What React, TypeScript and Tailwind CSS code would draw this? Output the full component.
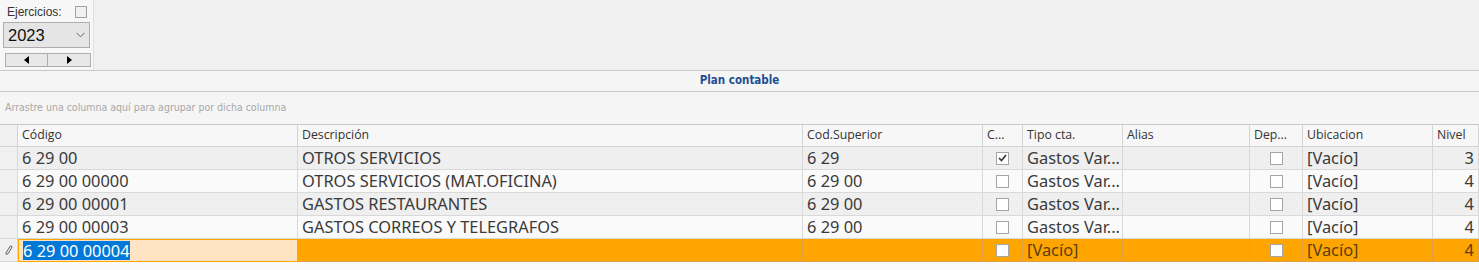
import React from "react";

const gridCols = "grid grid-cols-[18px_280px_505px_180px_40px_100px_127px_53px_130px_46px]";

type Row = { cod: string; desc: string; sup: string; c: boolean; tipo: string; ub: string; niv: string };
const rows: Row[] = [
  { cod: "6 29 00", desc: "OTROS SERVICIOS", sup: "6 29", c: true, tipo: "Gastos Var...", ub: "[Vacío]", niv: "3" },
  { cod: "6 29 00 00000", desc: "OTROS SERVICIOS (MAT.OFICINA)", sup: "6 29 00", c: false, tipo: "Gastos Var...", ub: "[Vacío]", niv: "4" },
  { cod: "6 29 00 00001", desc: "GASTOS RESTAURANTES", sup: "6 29 00", c: false, tipo: "Gastos Var...", ub: "[Vacío]", niv: "4" },
  { cod: "6 29 00 00003", desc: "GASTOS CORREOS Y TELEGRAFOS", sup: "6 29 00", c: false, tipo: "Gastos Var...", ub: "[Vacío]", niv: "4" },
];

function Check({ checked }: { checked?: boolean }) {
  return (
    <div className="w-[13px] h-[13px] border border-[#a5a5a5] bg-white flex items-center justify-center">
      {checked && (
        <svg width="9" height="8" viewBox="0 0 9 8">
          <path d="M1 4 L3.5 6.5 L8 1" stroke="#333" strokeWidth="1.6" fill="none" />
        </svg>
      )}
    </div>
  );
}

const cell = "border-r border-b border-[#d9d9d9] flex items-center px-[4px] text-[16.4px] text-[#3a3a3a] overflow-hidden whitespace-nowrap h-[23px]";

export default function App() {
  return (
    <div className="w-[1479px] h-[270px] bg-[#f5f5f5] overflow-hidden" style={{ fontFamily: '"Noto Sans", "Open Sans", sans-serif' }}>
      {/* Top panel */}
      <div className="h-[71px] bg-[#f0f0f0] border-b border-[#c8c8c8] flex">
        <div className="w-[94px] h-[70px] bg-[#f7f7f7] border-r border-[#e0e0e0] relative">
          <div className="flex items-center justify-between pl-[7px] pr-[6px] pt-[4px] h-[20px]">
            <span className="text-[12px] text-[#333] leading-none" style={{ fontFamily: '"Liberation Sans", sans-serif' }}>Ejercicios:</span>
            <div className="w-[12px] h-[12px] border border-[#a0a0a0] bg-[#f0f0f0]"></div>
          </div>
          <div className="mx-[3px] mt-[2px] h-[26px] bg-[#e5e5e5] border border-[#adadad] flex items-center justify-between pl-[4px] pr-[4px]">
            <span className="text-[16.5px] text-[#111] leading-none" style={{ fontFamily: '"Liberation Sans", sans-serif' }}>2023</span>
            <svg width="9" height="6" viewBox="0 0 9 6">
              <path d="M0.5 0.8 L4.5 4.8 L8.5 0.8" stroke="#666" strokeWidth="1" fill="none" />
            </svg>
          </div>
          <div className="ml-[5px] mt-[5px] w-[86px] h-[14px] flex">
            <div className="w-[43px] h-full bg-[#e8e8e8] border border-[#adadad] flex items-center justify-center">
              <svg width="5" height="8" viewBox="0 0 5 8"><path d="M5 0 L0 4 L5 8 Z" fill="#000" /></svg>
            </div>
            <div className="w-[43px] h-full bg-[#e8e8e8] border border-l-0 border-[#adadad] flex items-center justify-center">
              <svg width="5" height="8" viewBox="0 0 5 8"><path d="M0 0 L5 4 L0 8 Z" fill="#000" /></svg>
            </div>
          </div>
        </div>
      </div>
      {/* Title */}
      <div className="h-[21px] border-b border-[#c8c8c8] flex items-center justify-center bg-[#f5f5f5]">
        <span className="text-[11.5px] font-bold text-[#1f4e91]" style={{ fontFamily: '"DejaVu Sans Condensed", "DejaVu Sans", sans-serif' }}>Plan contable</span>
      </div>
      {/* Group panel */}
      <div className="h-[33px] border-b border-[#c8c8c8] flex items-center pl-[5px] bg-[#f5f5f5]">
        <span className="text-[10.5px] text-[#a8a8a8]" style={{ fontFamily: '"DejaVu Sans Condensed", "DejaVu Sans", sans-serif' }}>Arrastre una columna aquí para agrupar por dicha columna</span>
      </div>
      {/* Header */}
      <div className={`${gridCols} h-[22px] bg-[#f7f7f7]`}>
        {["", "Código", "Descripción", "Cod.Superior", "C...", "Tipo cta.", "Alias", "Dep...", "Ubicacion", "Nivel"].map((h, i) => (
          <div key={i} className={`border-r border-b border-[#d4d4d4] flex items-center px-[4px] text-[12.3px] text-[#333] whitespace-nowrap overflow-hidden ${i === 0 ? "bg-[#f0f0f0]" : ""}`} style={{ fontFamily: '"Open Sans", sans-serif' }}>
            {h}
          </div>
        ))}
      </div>
      {/* Rows */}
      {rows.map((r, ri) => {
        const bg = ri % 2 === 0 ? "bg-[#efefef]" : "bg-[#fafafa]";
        return (
          <div key={ri} className={`${gridCols} ${bg}`}>
            <div className="border-r border-b border-[#d9d9d9] bg-[#f0f0f0] h-[23px]"></div>
            <div className={cell}>{r.cod}</div>
            <div className={cell}>{r.desc}</div>
            <div className={cell}>{r.sup}</div>
            <div className={`${cell} justify-center`}><Check checked={r.c} /></div>
            <div className={cell}>{r.tipo}</div>
            <div className={cell}></div>
            <div className={`${cell} justify-center`}><Check /></div>
            <div className={cell}>{r.ub}</div>
            <div className={`${cell} justify-end`}>{r.niv}</div>
          </div>
        );
      })}
      {/* Edit row */}
      <div className={`${gridCols} bg-[#ffa500]`}>
        <div className="border-r border-b border-[#d9d9d9] bg-[#f0f0f0] h-[23px] flex items-center justify-center">
          <svg width="8" height="10" viewBox="0 0 8 10">
            <path d="M5.5 0.8 L7.2 1.8 L3 8.8 L1 9.2 L1.2 7.5 Z" stroke="#555" strokeWidth="0.9" fill="none" />
          </svg>
        </div>
        <div className="border border-[#ffa500] bg-[#ffe4c4] h-[23px] flex items-center pl-[4px]">
          <span className="bg-[#0078d7] text-white text-[16.4px] leading-[19px] px-0">6 29 00 00004</span>
        </div>
        <div className={`${cell} border-[#e0a040]`}></div>
        <div className={`${cell} border-[#e0a040]`}></div>
        <div className={`${cell} justify-center border-[#e0a040]`}><Check /></div>
        <div className={`${cell} border-[#e0a040] text-[#5a4010]`}>[Vacío]</div>
        <div className={`${cell} border-[#e0a040]`}></div>
        <div className={`${cell} justify-center border-[#e0a040]`}><Check /></div>
        <div className={`${cell} border-[#e0a040] text-[#5a4010]`}>[Vacío]</div>
        <div className={`${cell} justify-end border-[#e0a040] text-[#5a4010]`}>4</div>
      </div>
      <div className="h-[10px] bg-[#fafafa]"></div>
    </div>
  );
}
